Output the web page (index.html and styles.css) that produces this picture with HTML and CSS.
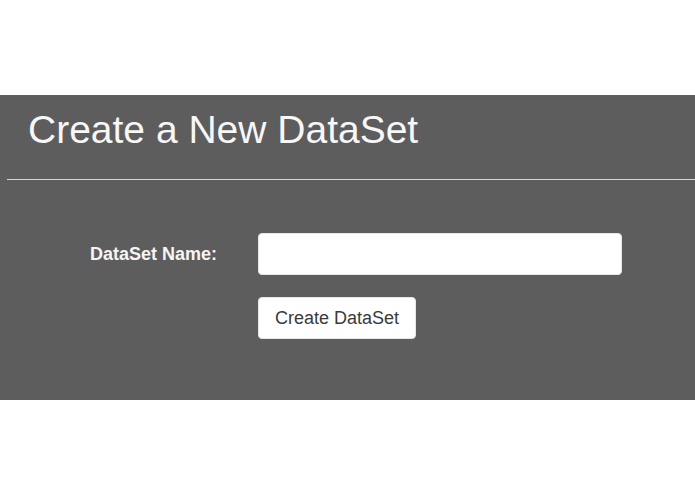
FILE: index.html
```html
<!DOCTYPE html>
<html>
<head>
<meta charset="utf-8">
<link rel="stylesheet" href="styles.css">
</head>
<body>
<div class="page">
  <section class="panel">
    <h1 class="title">Create a New DataSet</h1>
    <hr class="divider">
    <form class="form">
      <label class="label" for="name">DataSet Name:</label>
      <input class="input" id="name" type="text">
      <div class="actions">
        <button class="btn" type="button">Create DataSet</button>
      </div>
    </form>
  </section>
</div>
</body>
</html>
```
FILE: styles.css
```css
html, body {
  margin: 0;
  padding: 0;
  background: #ffffff;
  font-family: "Liberation Sans", Arial, sans-serif;
}
.page {
  padding-top: 95px;
}
.panel {
  background: #5d5d5d;
  height: 305px;
  box-sizing: border-box;
  padding-top: 12px;
}
.title {
  margin: 0 0 0 28px;
  font-size: 39px;
  font-weight: normal;
  line-height: 45px;
  color: #f7f7f7;
}
.divider {
  margin: 27px 0 0 7px;
  border: 0;
  height: 1px;
  background: #d4d4d4;
}
.form {
  display: grid;
  grid-template-columns: 258px 364px;
  grid-template-rows: 42px 42px;
  row-gap: 22px;
  margin-top: 53px;
}
.label {
  align-self: center;
  justify-self: end;
  padding-right: 41px;
  font-size: 18px;
  font-weight: bold;
  color: #f5f5f5;
}
.input {
  box-sizing: border-box;
  width: 364px;
  height: 42px;
  border: 1px solid #e6e6e6;
  border-radius: 4px;
  background: #ffffff;
  margin: 0;
  padding: 0 12px;
  font-size: 18px;
  font-family: inherit;
}
.actions {
  grid-column: 2;
}
.btn {
  box-sizing: border-box;
  height: 42px;
  width: 158px;
  margin: 0;
  padding: 0;
  border: 1px solid #e6e6e6;
  border-radius: 4px;
  background: #ffffff;
  color: #3a3a3a;
  font-family: inherit;
  font-size: 18px;
}
```
